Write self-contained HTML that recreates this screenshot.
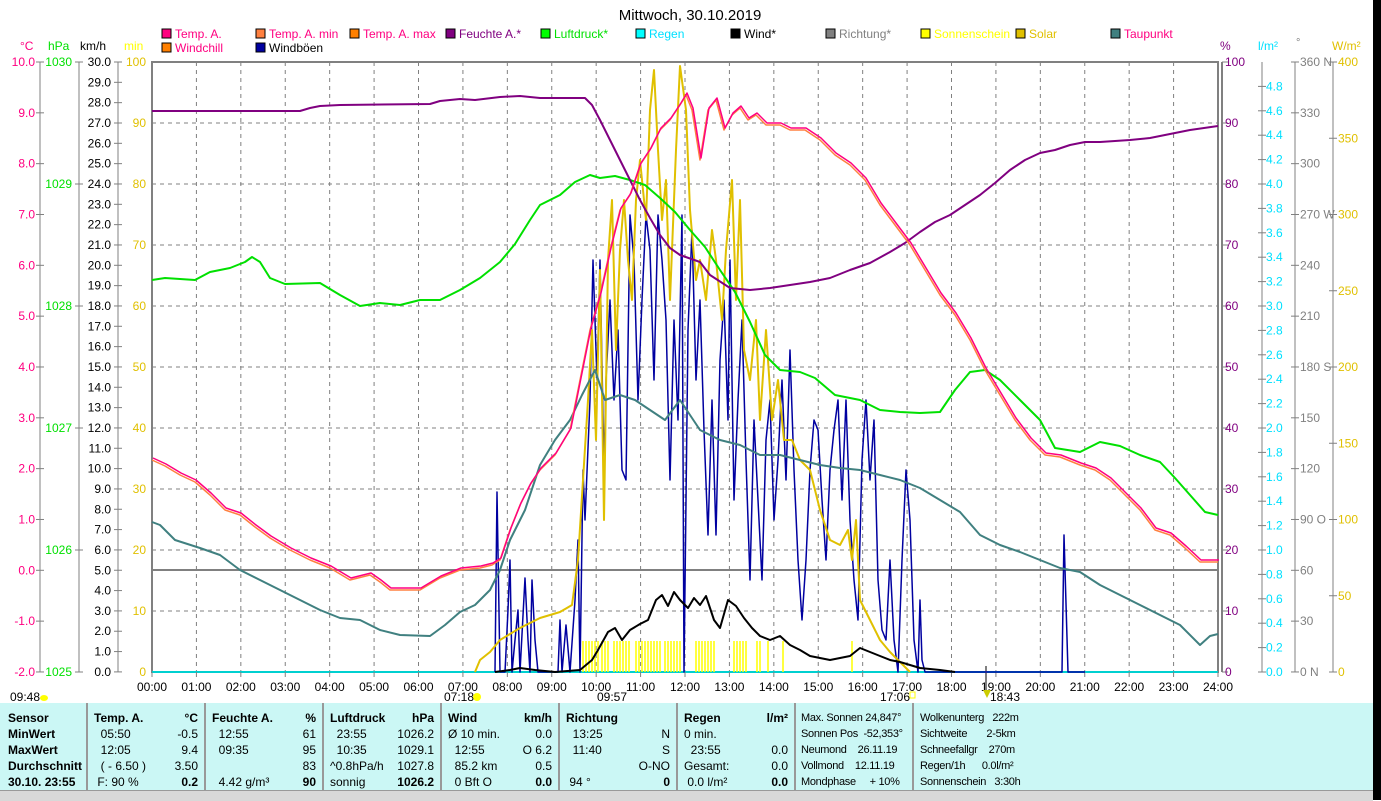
<!DOCTYPE html>
<html><head><meta charset="utf-8"><style>
body{margin:0;width:1381px;height:800px;overflow:hidden;background:#fff;font-family:"Liberation Sans",sans-serif;}
svg{position:absolute;left:0;top:0}
text{font-family:"Liberation Sans",sans-serif;font-size:11px}
#tbl{position:absolute;left:0;top:703px;width:1373px;height:87px;background:#cbf7f5;}
#bar{position:absolute;left:0;top:790px;width:1373px;height:10px;background:#d8d8d8;border-top:1px solid #999}
#blk{position:absolute;left:1373px;top:0;width:8px;height:800px;background:#000}
.c{position:absolute;top:0;height:87px;border-right:2px solid #999;font-size:12px;line-height:16px;padding-top:7px;box-sizing:border-box}
.c div{white-space:pre;position:relative;height:16px}
.r{position:absolute;right:6px;top:0}
b{font-weight:bold}
.sm{font-size:11px;letter-spacing:-0.3px}
</style></head><body>
<svg id="s" width="1381" height="800"></svg>
<div id="tbl">
<div class="c" style="left:0;width:88px;padding-left:8px"><div><b>Sensor</b></div><div><b>MinWert</b></div><div><b>MaxWert</b></div><div><b>Durchschnitt</b></div><div><b>30.10. 23:55</b></div></div>
<div class="c" style="left:88px;width:118px;padding-left:6px"><div><b>Temp. A.</b><span class="r"><b>°C</b></span></div><div>  05:50<span class="r">-0.5</span></div><div>  12:05<span class="r">9.4</span></div><div>  ( - 6.50 )<span class="r">3.50</span></div><div> F: 90 %<span class="r"><b>0.2</b></span></div></div>
<div class="c" style="left:206px;width:118px;padding-left:6px"><div><b>Feuchte A.</b><span class="r"><b>%</b></span></div><div>  12:55<span class="r">61</span></div><div>  09:35<span class="r">95</span></div><div> <span class="r">83</span></div><div>  4.42 g/m³<span class="r"><b>90</b></span></div></div>
<div class="c" style="left:324px;width:118px;padding-left:6px"><div><b>Luftdruck</b><span class="r"><b>hPa</b></span></div><div>  23:55<span class="r">1026.2</span></div><div>  10:35<span class="r">1029.1</span></div><div>^0.8hPa/h<span class="r">1027.8</span></div><div>sonnig<span class="r"><b>1026.2</b></span></div></div>
<div class="c" style="left:442px;width:118px;padding-left:6px"><div><b>Wind</b><span class="r"><b>km/h</b></span></div><div>Ø 10 min.<span class="r">0.0</span></div><div>  12:55<span class="r">O 6.2</span></div><div>  85.2 km<span class="r">0.5</span></div><div>  0 Bft O<span class="r"><b>0.0</b></span></div></div>
<div class="c" style="left:560px;width:118px;padding-left:6px"><div><b>Richtung</b></div><div>  13:25<span class="r">N</span></div><div>  11:40<span class="r">S</span></div><div> <span class="r">O-NO</span></div><div> 94 °<span class="r"><b>0</b></span></div></div>
<div class="c" style="left:678px;width:118px;padding-left:6px"><div><b>Regen</b><span class="r"><b>l/m²</b></span></div><div>0 min.</div><div>  23:55<span class="r">0.0</span></div><div>Gesamt:<span class="r">0.0</span></div><div> 0.0 l/m²<span class="r"><b>0.0</b></span></div></div>
<div class="c sm" style="left:796px;width:118px;padding-left:5px"><div>Max. Sonnen 24,847°</div><div>Sonnen Pos  -52,353°</div><div>Neumond    26.11.19</div><div>Vollmond    12.11.19</div><div>Mondphase     + 10%</div></div>
<div class="c sm" style="left:914px;width:459px;padding-left:6px;border:none"><div>Wolkenunterg   222m</div><div>Sichtweite       2-5km</div><div>Schneefallgr    270m</div><div>Regen/1h      0.0l/m²</div><div>Sonnenschein   3:30h</div></div>
</div>
<div id="bar"></div><div id="blk"></div>
<script>
var s=document.getElementById('s'),h='';
var L=152,R=1218,T=62,B=672,HW=(R-L)/24;
function t(x,y,str,c,a,sz){h+='<text x="'+x+'" y="'+y+'" fill="'+c+'" text-anchor="'+(a||'start')+'"'+(sz?' style="font-size:'+sz+'px"':'')+'>'+str+'</text>';}
function ln(x1,y1,x2,y2,c,w,d){h+='<line x1="'+x1+'" y1="'+y1+'" x2="'+x2+'" y2="'+y2+'" stroke="'+c+'" stroke-width="'+(w||1)+'"'+(d?' stroke-dasharray="'+d+'"':'')+'/>';}
function pl(p,c,w){h+='<polyline fill="none" stroke="'+c+'" stroke-width="'+(w||2)+'" stroke-linejoin="round" points="'+p+'"/>';}
for(var i=1;i<24;i++){var x=L+i*HW;ln(x,T,x,B,'#808080',1,'4,4');}
for(var i=1;i<10;i++){var y=T+i*61;ln(L,y,R,y,'#808080',1,'4,4');}
ln(L,570,R,570,'#808080',2);
h+='<rect x="'+L+'" y="'+T+'" width="'+(R-L)+'" height="'+(B-T)+'" fill="none" stroke="#808080" stroke-width="2"/>';
ln(R+4,T,R+4,B,'#808080',2);
ln(L,B,R,B,'#00d0d0',2);
for(var i=0;i<=24;i++){var x=L+i*HW;ln(x,B,x,B+5,'#808080',1);t(x,691,(i<10?'0':'')+i+':00','#000','middle',12);}
t(10,701,'09:48','#000','start',12);h+='<ellipse cx="44" cy="698" rx="4" ry="3" fill="#ff0"/>';
t(444,701,'07:18','#000','start',12);h+='<circle cx="477" cy="697" r="4" fill="#ff0"/>';
t(597,701,'09:57','#000','start',12);t(880,701,'17:06','#000','start',12);h+='<rect x="910" y="692" width="5" height="6" fill="none" stroke="#ff0"/>';
t(990,701,'18:43','#000','start',12);h+='<path d="M983 690l4 8l4-8z" fill="#cc0"/>';ln(986,666,986,690,'#808080',2);
t(690,20,'Mittwoch, 30.10.2019','#000','middle',15);
var lg=[[162,38,'#ff0080','Temp. A.','#ff0080'],[256,38,'#ff8040','Temp. A. min','#ff0080'],[350,38,'#ff8000','Temp. A. max','#ff0080'],[446,38,'#800080','Feuchte A.*','#800080'],[541,38,'#00ff00','Luftdruck*','#00e000'],[636,38,'#00ffff','Regen','#00e0ff'],[731,38,'#000','Wind*','#000'],[826,38,'#808080','Richtung*','#808080'],[921,38,'#ffff00','Sonnenschein','#ffff00'],[1016,38,'#e0c000','Solar','#e0c000'],[1111,38,'#408080','Taupunkt','#ff0080'],[162,52,'#ff8000','Windchill','#ff0080'],[256,52,'#0000a0','Windböen','#000']];
lg.forEach(function(g){h+='<rect x="'+g[0]+'" y="'+(g[1]-9)+'" width="9" height="9" fill="'+g[2]+'" stroke="#000"/>';t(g[0]+13,g[1],g[3],g[4],'start',12);});
t(20,50,'°C','#ff0080','start',12);t(48,50,'hPa','#00e000','start',12);t(80,50,'km/h','#000','start',12);t(124,50,'min','#ffff00','start',12);
ln(40,T,40,B,'#808080');ln(79,T,79,B,'#808080');ln(118,T,118,B,'#808080');
for(var i=0;i<=12;i++){var y=T+i*50.83;ln(36,y,44,y,'#808080');t(35,y+4,(10-i).toFixed(1),'#ff0080','end',12);}
for(var i=0;i<=5;i++){var y=T+i*122;ln(75,y,83,y,'#808080');t(72,y+4,1030-i,'#00e000','end',12);}
for(var i=0;i<=30;i++){var y=T+i*20.33;ln(114,y,122,y,'#808080');t(111,y+4,(30-i).toFixed(1),'#000','end',12);}
for(var i=0;i<=10;i++){var y=T+i*61;t(146,y+4,100-i*10,'#e0c000','end',12);}
t(1220,50,'%','#800080','start',12);t(1258,50,'l/m²','#00e0ff','start',12);t(1296,46,'°','#808080');t(1332,50,'W/m²','#e0c000','start',12);
for(var i=0;i<=10;i++){var y=T+i*61;ln(R+4,y,R+10,y,'#808080');t(1225,y+4,100-i*10,'#800080','start',12);}
ln(1262,T,1262,B,'#808080');
for(var i=0;i<=24;i++){var y=B-i*24.4;ln(1258,y,1266,y,'#808080');t(1266,y+4,(i*0.2).toFixed(1),'#00e0ff','start',12);}
ln(1295,T,1295,B,'#808080');
var dl={360:' N',270:' W',180:' S',90:' O',0:' N'};
for(var i=0;i<=12;i++){var v=360-i*30,y=T+i*50.83;ln(1291,y,1299,y,'#808080');t(1300,y+4,v+(dl[v]||''),'#808080','start',12);}
ln(1333,T,1333,B,'#808080');
for(var i=0;i<=8;i++){var y=T+i*76.25;ln(1329,y,1337,y,'#808080');t(1338,y+4,400-i*50,'#e0c000','start',12);}
var sb=[[580,598],[602,610],[614,630],[636,660],[665,680],[696,716],[734,748],[757,762],[768,770],[783,785],[852,854]];
sb.forEach(function(r){for(var x=r[0];x<=r[1];x+=3)ln(x,641,x,672,'#ffff00',1.5);});
pl('495,672 497,492 500,672 505,672 508,610 510,560 512,672 515,640 518,610 520,672 525,578 528,640 530,672 532,580 535,640 538,672 545,672 558,672 560,620 562,672 566,625 570,672 575,600 578,540 580,672 583,470 585,520 590,400 593,260 597,380 600,260 604,470 606,380 610,300 614,400 618,330 622,470 626,480 630,215 634,260 638,400 642,300 646,215 650,250 654,380 658,215 662,260 666,320 670,480 674,320 678,420 682,215 684,672 688,330 692,230 696,380 700,300 704,430 708,535 712,400 716,535 720,360 724,300 728,420 730,260 734,500 738,400 742,320 746,460 750,580 754,420 758,500 762,580 766,440 770,400 774,520 778,460 782,380 786,480 790,350 794,470 798,560 802,620 806,560 810,470 814,420 818,430 822,500 826,560 830,470 834,430 838,400 842,500 846,400 850,520 854,580 858,620 862,460 866,400 870,480 874,420 878,580 882,630 886,640 890,560 894,640 898,672 902,560 906,470 910,520 914,640 918,672 920,600 922,660 925,672 950,672 1062,672 1064,535 1068,672 1085,672','#0000a0',1.5);
pl('475,672 480,660 490,652 500,640 520,628 540,618 560,612 572,605 578,560 583,480 588,400 592,330 596,440 600,270 604,520 608,260 612,200 616,350 620,250 624,200 628,260 632,300 636,200 640,160 646,220 650,110 654,70 658,150 662,220 666,180 670,300 676,150 680,66 686,110 690,210 696,280 700,260 706,300 712,230 716,260 722,320 726,250 732,180 736,300 740,200 744,350 750,380 756,320 760,420 766,330 772,420 778,380 784,440 792,440 800,460 810,470 820,510 830,540 840,545 848,530 852,560 856,520 860,600 870,620 880,640 890,652 900,662 906,668 910,672','#e0c000',2);
pl('152,522 160,525 175,540 200,548 220,555 240,570 260,580 280,590 300,600 320,610 340,618 360,620 380,630 400,635 430,636 445,625 460,612 475,605 490,590 500,570 510,540 525,510 540,465 555,440 570,420 582,395 595,370 605,400 620,395 635,400 650,410 665,420 680,400 700,430 720,440 740,445 760,455 780,455 800,460 820,465 840,468 860,470 880,475 900,480 920,488 940,500 960,512 980,535 1000,545 1020,552 1040,560 1060,568 1080,572 1100,585 1120,595 1140,605 1160,615 1180,625 1200,645 1210,636 1218,634','#408080',2);
pl('152,280 165,278 195,280 210,272 230,268 245,262 252,257 260,262 270,278 285,284 320,283 340,295 360,306 380,303 400,305 420,300 440,300 460,290 480,278 500,262 515,244 530,220 540,205 560,195 575,182 590,175 600,178 615,176 630,180 645,185 660,198 675,212 690,230 705,247 720,270 735,292 750,322 765,355 780,370 800,372 815,378 835,395 860,400 880,410 900,412 920,413 940,412 955,390 970,372 985,370 1000,380 1020,400 1040,420 1055,448 1080,452 1100,442 1120,446 1140,455 1160,462 1175,478 1190,495 1205,512 1218,515','#00e000',2);
pl('152,111 300,111 310,108 320,106 340,105 430,104 440,101 460,99 475,100 500,97 520,96 540,98 575,98 585,98 592,105 600,120 610,140 620,160 630,180 640,200 650,218 660,235 670,248 680,255 700,262 710,275 730,288 750,290 770,288 790,285 810,282 830,278 850,270 870,263 890,252 905,243 920,232 935,222 950,215 965,205 980,195 995,183 1010,170 1025,160 1040,153 1055,150 1070,145 1085,142 1100,142 1130,140 1150,138 1170,134 1190,130 1218,126','#800080',2);
var tp='152,460 165,466 180,475 195,482 210,495 225,510 240,515 255,527 270,538 290,550 310,560 330,568 350,580 370,575 380,582 390,590 420,590 440,578 460,570 480,568 492,565 500,560 510,530 520,505 530,485 540,470 555,455 570,430 580,380 590,330 600,295 610,250 620,210 630,195 640,165 650,150 660,130 670,120 680,105 686,95 692,110 700,160 708,110 716,100 724,130 732,115 740,108 748,120 756,115 766,125 780,125 790,130 805,130 820,140 835,155 850,165 865,180 880,205 895,225 910,245 925,270 940,295 955,315 970,340 985,370 1000,395 1015,420 1030,440 1045,455 1060,457 1080,465 1095,470 1110,480 1125,495 1140,510 1155,530 1170,535 1185,548 1200,562 1218,562';
pl(tp,'#ff8040',1.5);
h+='<g transform="translate(1,-2)">';pl(tp,'#ff0080',1.5);h+='</g>';
pl('495,672 510,670 520,668 535,670 555,672 580,670 592,660 598,650 608,632 615,628 622,640 630,630 640,624 648,620 656,600 662,595 668,606 674,592 680,600 688,608 694,598 700,605 706,596 714,620 720,628 728,600 736,606 744,618 752,628 760,636 770,640 780,636 790,645 800,650 810,656 830,660 850,656 860,648 870,652 880,656 890,660 900,662 920,668 940,670 955,672','#000',2);
s.innerHTML=h;
</script>
</body></html>
